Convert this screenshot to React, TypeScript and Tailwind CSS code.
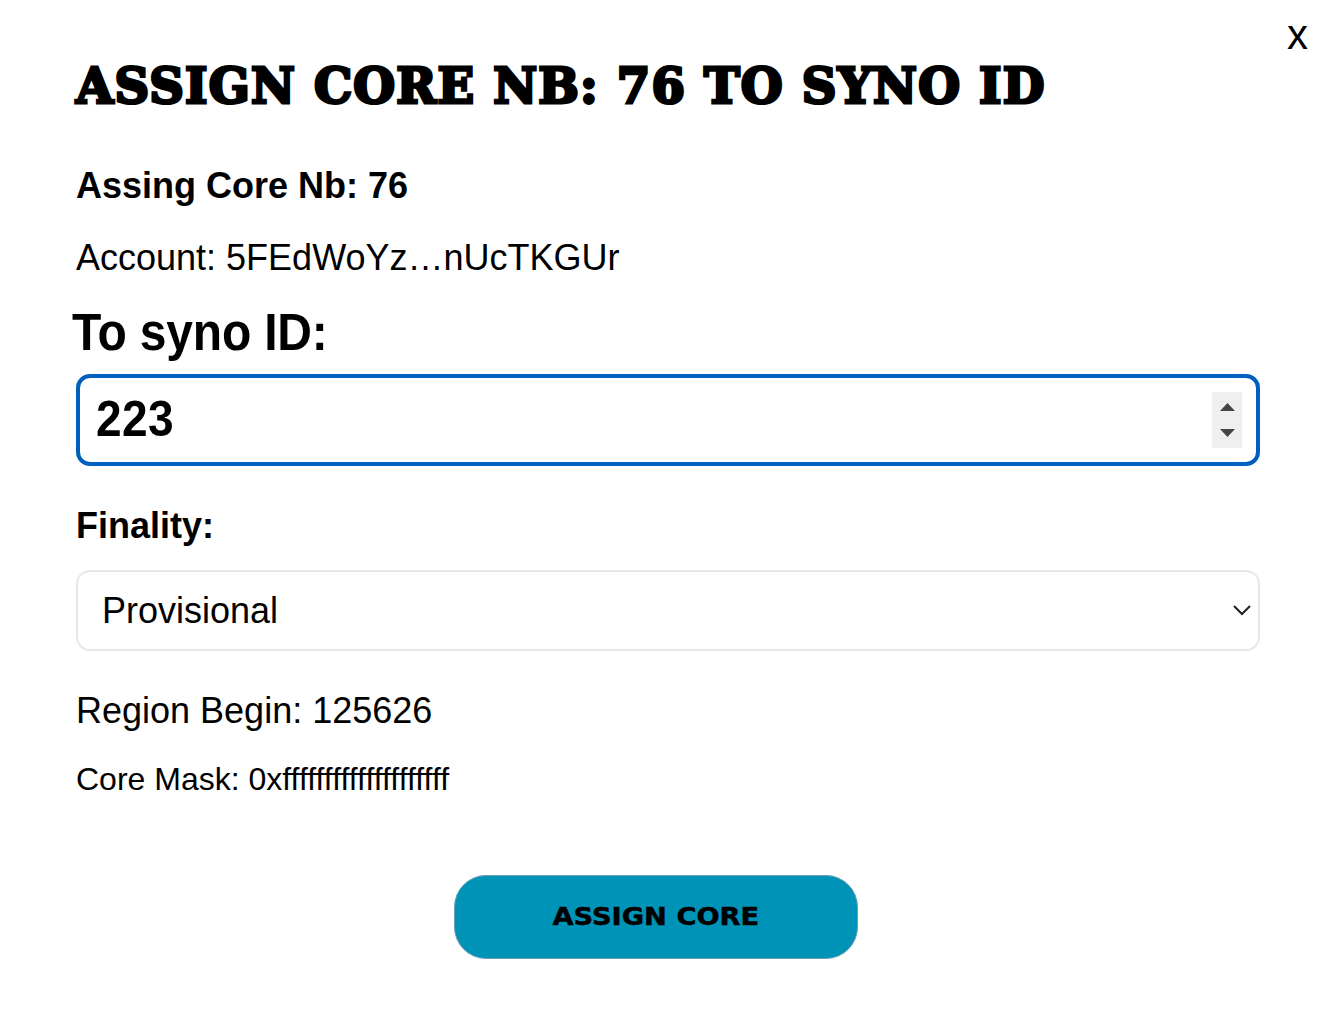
import React from "react";

export default function App() {
  return (
    <div className="relative w-[1322px] h-[1033px] bg-white text-black font-['Liberation_Sans',Arial,sans-serif] pl-[76px] pr-[62px] pt-[56px]">
      <div className="absolute right-[14px] top-[11px] text-[42px] leading-[48px]">x</div>
      <h1 className="text-[48px] leading-[60px] font-bold font-['DejaVu_Serif','Liberation_Serif',serif] [-webkit-text-stroke:3px_black] tracking-[1.2px] whitespace-nowrap">ASSIGN CORE NB: 76 TO SYNO ID</h1>
      <p className="mt-[49px] text-[36px] leading-[42px] font-bold">Assing Core Nb: 76</p>
      <p className="mt-[30px] text-[36px] leading-[42px]">Account: 5FEdWoYz…nUcTKGUr</p>
      <label className="block -ml-[4px] mt-[26px] text-[48px] leading-[56px] font-bold tracking-[-0.2px] origin-left scale-y-[1.08]">To syno ID:</label>
      <div className="mt-[13px] h-[92px] rounded-[14px] border-[4px] border-[#0060c0] flex items-center justify-between pl-[16px] pr-[14px]">
        <span className="text-[46px] font-bold scale-y-[1.1] -mt-[4px] tracking-[0.4px]">223</span>
        <div className="w-[30px] h-[56px] bg-[#efefef] flex flex-col items-center justify-center gap-[18px]">
          <svg width="15" height="8" viewBox="0 0 15 8"><path d="M7.5 0L15 8H0z" fill="#444" /></svg>
          <svg width="15" height="8" viewBox="0 0 15 8"><path d="M7.5 8L15 0H0z" fill="#444" /></svg>
        </div>
      </div>
      <p className="mt-[39px] text-[36px] leading-[42px] font-bold">Finality:</p>
      <div className="mt-[23px] h-[81px] rounded-[14px] border-2 border-[#e8e8e8] flex items-center justify-between pl-[25px] pr-[6px]">
        <span className="text-[36px] -ml-[1px]">Provisional</span>
        <svg className="-mt-[2px]" width="20" height="12" viewBox="0 0 20 12" fill="none" stroke="#222" strokeWidth="2"><path d="M2 2l8 8 8-8" /></svg>
      </div>
      <p className="mt-[39px] text-[36px] leading-[42px]">Region Begin: 125626</p>
      <p className="mt-[28px] text-[32px] leading-[38px]">Core Mask: 0xffffffffffffffffffff</p>
      <div className="flex justify-center mt-[77px] pr-[24px]">
        <button className="w-[404px] h-[84px] rounded-[32px] bg-[#0093b8] border border-[#6b9fb4] text-[25px] font-bold font-['DejaVu_Sans','Liberation_Sans',sans-serif]">
          <span className="inline-block scale-x-[1.09] [-webkit-text-stroke:0.5px_black]">ASSIGN CORE</span>
        </button>
      </div>
    </div>
  );
}
